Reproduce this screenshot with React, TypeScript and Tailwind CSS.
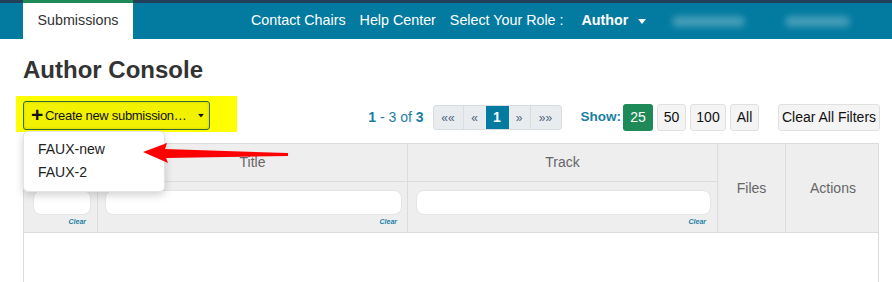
const font = { fontFamily: '"Liberation Sans", Arial, sans-serif' };

function Caret({ className = "" }: { className?: string }) {
  return (
    <svg width="8" height="5" viewBox="0 0 8 5" className={`shrink-0 ${className}`}>
      <path d="M0 0 L8 0 L4 5 Z" fill="currentColor" />
    </svg>
  );
}

function TopBar() {
  return (
    <div className="border-t-[3px] border-[#243f5a] bg-[#037ba0] h-[39px] flex items-stretch text-[14.3px]">
      <div className="ml-[23px] -mt-[3px] w-[110px] bg-white border-t-[3px] border-[#1e8a57] flex items-center justify-center text-[#333]">
        Submissions
      </div>
      <div className="ml-[118px] flex items-center text-white gap-[14px]">
        <span>Contact Chairs</span>
        <span>Help Center</span>
        <span>Select Your Role :</span>
        <span className="ml-[4px] font-bold flex items-center gap-[10px]">
          Author <Caret />
        </span>
        <span className="ml-[12px] w-[73px] h-[11px] rounded-full bg-white/25 blur-[3px]" />
        <span className="ml-[26px] w-[65px] h-[11px] rounded-full bg-white/25 blur-[3px]" />
      </div>
    </div>
  );
}

function Toolbar() {
  return (
    <div className="flex items-start h-[36px] pl-[16px] pr-[12px]">
      <div className="bg-[#ffff00] h-[36px] w-[221px] pl-[7px] pt-[5px]">
        <button className="h-[29px] w-[187px] whitespace-nowrap border border-[#2e6a2e] rounded-[3px] bg-[#f2f200] flex items-center pl-[7px] text-[13px] tracking-[-0.3px] text-[#111] shadow-[inset_0_0_3px_rgba(0,0,0,0.15)]">
          <span className="text-[21px] font-bold leading-none mr-[2px] -mt-[2px]">+</span>
          Create new submission…
          <Caret className="ml-[10px] scale-75" />
        </button>
      </div>
      <div className="ml-auto mt-[8px] flex items-center">
        <span className="text-[14px] text-[#1a7fa5] mr-[9px]">
          <b>1</b> - 3 of <b>3</b>
        </span>
        <div className="flex h-[25px] border border-[#d9dde0] rounded-[3px] bg-[#e9ecef] text-[12px] text-[#4f6680] overflow-hidden">
          <span className="w-[30px] flex items-center justify-center border-r border-[#d9dde0]">««</span>
          <span className="w-[22px] flex items-center justify-center">«</span>
          <span className="w-[23px] flex items-center justify-center bg-[#037ba0] text-white font-bold text-[14px]">1</span>
          <span className="w-[22px] flex items-center justify-center border-r border-[#d9dde0]">»</span>
          <span className="w-[30px] flex items-center justify-center">»»</span>
        </div>
        <span className="ml-[19px] mr-[2px] text-[13.5px] font-bold text-[#1a7fa5]">Show:</span>
        <div className="flex gap-[4px] text-[14px] text-[#111]">
          <span className="h-[27px] w-[30px] rounded-[3px] bg-[#1e8a57] text-white flex items-center justify-center">25</span>
          <span className="h-[27px] w-[29px] rounded-[3px] bg-[#f4f4f4] border border-[#e0e0e0] flex items-center justify-center">50</span>
          <span className="h-[27px] w-[36px] rounded-[3px] bg-[#f4f4f4] border border-[#e0e0e0] flex items-center justify-center">100</span>
          <span className="h-[27px] w-[29px] rounded-[3px] bg-[#f4f4f4] border border-[#e0e0e0] flex items-center justify-center">All</span>
        </div>
        <span className="ml-[19px] h-[27px] w-[102px] rounded-[3px] bg-[#f4f4f4] border border-[#e0e0e0] flex items-center justify-center text-[14px] text-[#111]">
          Clear All Filters
        </span>
      </div>
    </div>
  );
}

function FilterCell({ pad = "px-[8px]" }: { pad?: string }) {
  return (
    <div className={`border-r border-[#dcdcdc] ${pad} pt-[8px] flex flex-col`}>
      <div className="h-[25px] bg-white border border-[#e4e4e4] rounded-[8px]" />
      <span className="self-end mt-[3px] mr-[5px] text-[7px] italic font-bold text-[#1a7fa5] leading-none">Clear</span>
    </div>
  );
}

function Table() {
  return (
    <div className="mx-[23px] mt-[11px] border-x border-[#dcdcdc] h-[139px] w-[856px]">
      <div className="grid grid-cols-[74px_310px_310px_68px_94px] grid-rows-[38px_50px] bg-[#eeeeee] border-t border-b border-[#dcdcdc] text-[14px] text-[#666]">
        <div className="border-r border-b border-[#dcdcdc]" />
        <div className="border-r border-b border-[#dcdcdc] flex items-center justify-center">Title</div>
        <div className="border-r border-b border-[#dcdcdc] flex items-center justify-center">Track</div>
        <div className="row-span-2 border-r border-[#dcdcdc] flex items-center justify-center">Files</div>
        <div className="row-span-2 flex items-center justify-center">Actions</div>
        <FilterCell pad="pl-[9px] pr-[6px]" />
        <FilterCell pad="pl-[7px] pr-[5px]" />
        <FilterCell pad="pl-[8px] pr-[6px]" />
      </div>
      <div className="bg-white" />
    </div>
  );
}

export default function App() {
  return (
    <div className="relative w-[892px] h-[282px] overflow-hidden bg-white" style={font}>
      <TopBar />
      <h1 className="ml-[23px] mt-[16px] h-[41px] text-[24px] font-bold text-[#333] leading-[30px]">
        Author Console
      </h1>
      <Toolbar />
      <Table />

      <div className="absolute left-[23px] top-[131px] w-[142px] h-[61px] bg-white rounded-[5px] border border-[#e4e4e4] shadow-[0_3px_8px_rgba(0,0,0,0.18)] text-[14px] text-[#222] pl-[14px] pt-[6px] leading-[23px]">
        <div>FAUX-new</div>
        <div>FAUX-2</div>
      </div>

      <svg className="absolute left-[140px] top-[140px]" width="152" height="26" viewBox="0 0 152 26">
        <path
          d="M3 12 L27 3 L25 9 L148 13 L148 16 L26 18 L28 23 Z"
          fill="#ff0000"
        />
      </svg>
    </div>
  );
}
